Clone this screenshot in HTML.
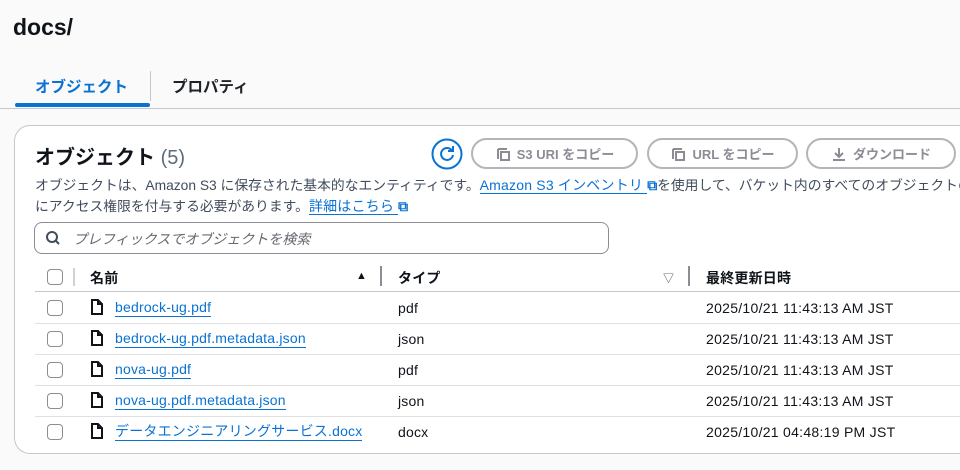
<!DOCTYPE html>
<html><head><meta charset="utf-8"><style>
*{margin:0;padding:0;box-sizing:border-box}
body{width:960px;height:470px;overflow:hidden;background:#fafafa;font-family:"Liberation Sans","Noto Sans CJK JP",sans-serif;color:#0f141a;position:relative}
.a{position:absolute;white-space:nowrap}
.card{position:absolute;left:14px;top:125px;width:946px;height:329px;background:#fff;border:1px solid #c6c6cd;border-right:none;border-radius:16px 0 0 16px}
.btn{position:absolute;top:138px;height:31px;border:2px solid #b4b4bb;border-radius:16px;color:#8c8c94;font-size:13px;font-weight:bold;display:flex;align-items:center;justify-content:center;gap:6px}
.cb{position:absolute;left:47px;width:16px;height:16px;border:1.5px solid #8c8c94;border-radius:4px;background:#fff}
.ln{position:absolute;left:35px;width:925px;height:1px;background:#e0e0e3}
.lk{color:#0972d3;border-bottom:1px solid #0972d3;font-size:14px;line-height:17px;letter-spacing:0.2px}
.t{font-size:14px;letter-spacing:0.2px}
.d{font-size:14px;letter-spacing:0.28px}
</style></head><body>
<div class="a" style="left:13px;top:14px;font-size:23px;font-weight:bold">docs/</div>
<div class="a" style="left:35px;top:75px;font-size:15.5px;font-weight:bold;color:#0972d3">オブジェクト</div>
<div class="a" style="left:150px;top:71px;width:1px;height:30px;background:#c6c6cd"></div>
<div class="a" style="left:172px;top:75px;font-size:15.5px;font-weight:bold;color:#1f2328">プロパティ</div>
<div class="a" style="left:15px;top:103px;width:135px;height:4px;background:#0972d3;border-radius:2px"></div>
<div class="a" style="left:0;top:108px;width:960px;height:1px;background:#c6c6cd"></div>
<div class="card"></div>
<div class="a" style="left:35px;top:141px;font-size:20px;font-weight:bold">オブジェクト <span style="font-weight:normal;color:#5f6b7a">(5)</span></div>
<svg class="a" style="left:431px;top:138px" width="32" height="32" viewBox="0 0 32 32"><circle cx="16" cy="16" r="14.5" fill="none" stroke="#0972d3" stroke-width="2"/><path d="M21 12.5A6 6 0 1 0 22 17" fill="none" stroke="#0972d3" stroke-width="2"/><path d="M22 8v5h-5" fill="none" stroke="#0972d3" stroke-width="2"/></svg>
<div class="btn" style="left:471px;width:167px"><svg width="16" height="16"><path d="M3 3v10M3 3h9M6 6h8v8H6z" fill="none" stroke="#8c8c94" stroke-width="2"/></svg>S3 URI をコピー</div>
<div class="btn" style="left:647px;width:151px"><svg width="16" height="16"><path d="M3 3v10M3 3h9M6 6h8v8H6z" fill="none" stroke="#8c8c94" stroke-width="2"/></svg>URL をコピー</div>
<div class="btn" style="left:806px;width:150px"><svg width="16" height="16"><path d="M8 2v9M4 7l4 4 4-4M2 14h12" fill="none" stroke="#8c8c94" stroke-width="2"/></svg>ダウンロード</div>
<div class="a" style="left:35px;top:175px;width:925px;overflow:hidden;font-size:13.8px;color:#414d5c;line-height:21px">オブジェクトは、Amazon S3 に保存された基本的なエンティティです。<span class="lk">Amazon S3 インベントリ </span><span style="color:#0972d3;font-weight:bold">⧉</span>を使用して、バケット内のすべてのオブジェクトのリスト<br>にアクセス権限を付与する必要があります。<span class="lk">詳細はこちら </span><span style="color:#0972d3;font-weight:bold">⧉</span></div>
<div class="a" style="left:34px;top:222px;width:575px;height:32px;border:1px solid #8c8c94;border-radius:8px;background:#fff"></div>
<svg class="a" style="left:45px;top:230px" width="16" height="16"><circle cx="7" cy="7" r="5" fill="none" stroke="#414d5c" stroke-width="2"/><path d="M10.5 10.5L14 14" stroke="#414d5c" stroke-width="2"/></svg>
<div class="a" style="left:73px;top:229px;font-size:14px;font-style:italic;color:#656871">プレフィックスでオブジェクトを検索</div>
<div class="cb" style="top:269px"></div>
<div class="a" style="left:73px;top:268px;width:2px;height:18px;background:#d1d1d5"></div>
<div class="a t" style="left:90px;top:268px;font-weight:bold">名前</div>
<div class="a" style="left:356px;top:270px;font-size:11px">▲</div>
<div class="a" style="left:380px;top:266px;width:2px;height:20px;background:#8c8c94"></div>
<div class="a t" style="left:398px;top:268px;font-weight:bold">タイプ</div>
<div class="a" style="left:663px;top:270px;font-size:11px;color:#414d5c">▽</div>
<div class="a" style="left:688px;top:266px;width:2px;height:20px;background:#8c8c94"></div>
<div class="a t" style="left:706px;top:268px;font-weight:bold">最終更新日時</div>
<div class="ln" style="top:291px;background:#c6c6cd"></div>
<div class="ln" style="top:323px"></div><div class="ln" style="top:354px"></div><div class="ln" style="top:385px"></div><div class="ln" style="top:416px"></div>
<div class="cb" style="top:300px"></div><div class="cb" style="top:331px"></div><div class="cb" style="top:362px"></div><div class="cb" style="top:393px"></div><div class="cb" style="top:424px"></div>
<svg class="a" style="left:90px;top:299px" width="14" height="16"><path d="M2 1h6l4 4v10H2z M8 1v4h4" fill="none" stroke="#0f141a" stroke-width="2"/></svg>
<svg class="a" style="left:90px;top:330px" width="14" height="16"><path d="M2 1h6l4 4v10H2z M8 1v4h4" fill="none" stroke="#0f141a" stroke-width="2"/></svg>
<svg class="a" style="left:90px;top:361px" width="14" height="16"><path d="M2 1h6l4 4v10H2z M8 1v4h4" fill="none" stroke="#0f141a" stroke-width="2"/></svg>
<svg class="a" style="left:90px;top:392px" width="14" height="16"><path d="M2 1h6l4 4v10H2z M8 1v4h4" fill="none" stroke="#0f141a" stroke-width="2"/></svg>
<svg class="a" style="left:90px;top:423px" width="14" height="16"><path d="M2 1h6l4 4v10H2z M8 1v4h4" fill="none" stroke="#0f141a" stroke-width="2"/></svg>
<div class="a lk" style="left:115px;top:299px">bedrock-ug.pdf</div>
<div class="a lk" style="left:115px;top:330px">bedrock-ug.pdf.metadata.json</div>
<div class="a lk" style="left:115px;top:361px">nova-ug.pdf</div>
<div class="a lk" style="left:115px;top:392px">nova-ug.pdf.metadata.json</div>
<div class="a lk" style="left:115px;top:423px">データエンジニアリングサービス.docx</div>
<div class="a t" style="left:398px;top:300px">pdf</div>
<div class="a t" style="left:398px;top:331px">json</div>
<div class="a t" style="left:398px;top:362px">pdf</div>
<div class="a t" style="left:398px;top:393px">json</div>
<div class="a t" style="left:398px;top:424px">docx</div>
<div class="a d" style="left:706px;top:300px">2025/10/21 11:43:13 AM JST</div>
<div class="a d" style="left:706px;top:331px">2025/10/21 11:43:13 AM JST</div>
<div class="a d" style="left:706px;top:362px">2025/10/21 11:43:13 AM JST</div>
<div class="a d" style="left:706px;top:393px">2025/10/21 11:43:13 AM JST</div>
<div class="a d" style="left:706px;top:424px">2025/10/21 04:48:19 PM JST</div>
</body></html>
